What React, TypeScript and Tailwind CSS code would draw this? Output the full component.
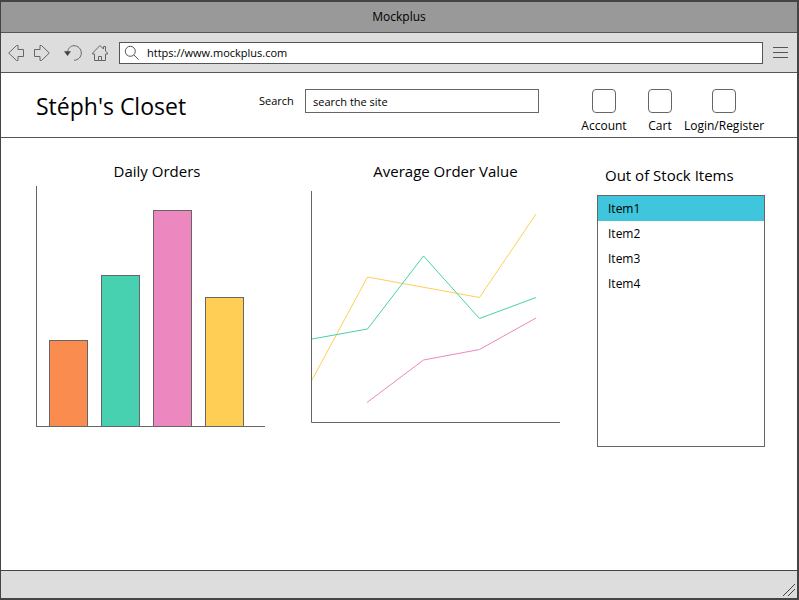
import { useState } from "react";

const BARS = [
  { name: "First", value: 86, color: "bg-[#fb8c50]" },
  { name: "Second", value: 151, color: "bg-[#48d1b0]" },
  { name: "Third", value: 216, color: "bg-[#ec87c0]" },
  { name: "Fourth", value: 129, color: "bg-[#ffce55]" },
];

const LINES = [
  { color: "#ffce55", points: "1,189 56.500,86 168.500,106.500 225,23" },
  { color: "#48cfad", points: "1,148 56.500,138 112.500,65 168.500,127.500 225,106.500" },
  { color: "#ec87c0", points: "56,211.500 112.500,169 168.500,158.500 225,127" },
];

const ITEMS = ["Item1", "Item2", "Item3", "Item4"];

function BackIcon() {
  return (
    <svg width="16" height="18" viewBox="0 0 16 18" fill="none" stroke="#666" aria-hidden="true">
      <path d="M.7 9 8.500 1.500h1.500v4h5.500v7H10v4H8.500Z" />
    </svg>
  );
}

function ForwardIcon() {
  return (
    <svg width="16" height="18" viewBox="0 0 16 18" fill="none" stroke="#666" aria-hidden="true">
      <path d="M15.300 9 7.500 1.500H6v4H.5v7H6v4h1.500Z" />
    </svg>
  );
}

function ReloadIcon() {
  return (
    <svg width="18" height="18" viewBox="0 0 18 18" fill="none" stroke="#666" aria-hidden="true">
      <path d="M3.500 8C4 4.500 6.500 1.700 10 1.700c4 0 7.300 3.200 7.300 7.300 0 4-3 7-7.300 7.300" />
      <path d="M0 7.300h7L3.500 12Z" fill="#444" stroke="none" />
    </svg>
  );
}

function HomeIcon() {
  return (
    <svg width="16" height="18" viewBox="0 0 16 18" fill="none" stroke="#666" aria-hidden="true">
      <path d="M.7 9 8 1.500l3.500 3.500V2.500h2V7l2 2v1h-2v6.500h-11V10h-2Z" />
      <path d="M6.500 16.500v-4h3v4" />
    </svg>
  );
}

function SearchIcon() {
  return (
    <svg width="16" height="16" viewBox="0 0 16 16" fill="none" stroke="#555" aria-hidden="true">
      <circle cx="6.300" cy="6.300" r="5" />
      <path d="m10 10 4.700 4.700" />
    </svg>
  );
}

function MenuIcon() {
  return (
    <svg width="15" height="11" viewBox="0 0 15 11" stroke="#555" aria-hidden="true">
      <path d="M0 .5h15M0 5.500h15M0 10.500h15" />
    </svg>
  );
}

function Shortcut({ label, width }: { label: string; width: string }) {
  return (
    <button type="button" className={`flex flex-col items-center gap-[5px] ${width}`}>
      <span className="size-6 rounded border border-[#666]" />
      <span className="leading-4 whitespace-nowrap">{label}</span>
    </button>
  );
}

function BarChart() {
  return (
    <div className="mt-[3px] mr-[9px] flex h-[241px] items-end gap-[13px] border-b border-l border-[#666] pr-[21px] pl-3">
      {BARS.map((bar) => (
        <div
          key={bar.name}
          className={`flex-1 border-x border-t border-[#666] ${bar.color}`}
          style={{ height: bar.value }}
        />
      ))}
    </div>
  );
}

function LineChart() {
  return (
    <svg
      className="mt-2 h-[232px] w-full"
      viewBox="0 0 249 232"
      preserveAspectRatio="none"
      fill="none"
      aria-hidden="true"
    >
      {LINES.map((line) => (
        <polyline key={line.color} points={line.points} stroke={line.color} vectorEffect="non-scaling-stroke" />
      ))}
      <path d="M.5 0v231.500H249" stroke="#666" vectorEffect="non-scaling-stroke" />
    </svg>
  );
}

export default function App() {
  const [selected, setSelected] = useState("Item1");

  return (
    <div className="flex min-h-screen flex-col border-t-2 border-r-2 border-b-2 border-l border-[#444] bg-white font-['Open_Sans','Noto_Sans',sans-serif] text-[12px] text-black">
      <div className="flex h-[31px] items-center justify-center border-b border-[#555] bg-[#999]">Mockplus</div>

      <nav className="flex h-10 items-center border-b border-[#555] bg-[#ddd] pr-[9px] pl-[7px]">
        <div className="flex items-center gap-[10px]">
          <button type="button" aria-label="Back"><BackIcon /></button>
          <button type="button" aria-label="Forward"><ForwardIcon /></button>
          <button type="button" aria-label="Reload" className="ml-1"><ReloadIcon /></button>
          <button type="button" aria-label="Home"><HomeIcon /></button>
        </div>
        <div className="mr-[10px] ml-[11px] flex h-[22px] flex-1 items-center gap-[7px] border border-[#555] bg-white pl-1">
          <SearchIcon />
          <input
            type="text"
            aria-label="Address"
            defaultValue="https://www.mockplus.com"
            className="h-5 min-w-0 flex-1 text-[11px] outline-none"
          />
        </div>
        <button type="button" aria-label="Menu"><MenuIcon /></button>
      </nav>

      <header className="flex h-[65px] justify-between border-b border-[#555] pr-[33px] pl-[35px]">
        <h1 className="w-[223px] pt-[15px] text-[23px] leading-9 whitespace-nowrap">Stéph's Closet</h1>
        <div className="flex flex-1 items-start pt-4">
          <label htmlFor="site-search" className="w-[46px] text-[11px] leading-6">Search</label>
          <input
            id="site-search"
            type="text"
            defaultValue="search the site"
            className="h-6 min-w-0 flex-1 border border-[#666] px-[7px] text-[11px] outline-none"
          />
        </div>
        <div className="ml-[33px] flex items-start pt-4">
          <Shortcut label="Account" width="w-16" />
          <Shortcut label="Cart" width="w-12" />
          <Shortcut label="Login/Register" width="w-20" />
        </div>
      </header>

      <main className="grid flex-1 grid-cols-[238fr_249fr_168fr] items-start gap-x-[37px] pt-[21px] pr-8 pb-10 pl-[35px]">
        <section>
          <h2 className="pl-1 text-center text-[15px] leading-6">Daily Orders</h2>
          <BarChart />
        </section>
        <section>
          <h2 className="pl-5 text-center text-[15px] leading-6">Average Order Value</h2>
          <LineChart />
        </section>
        <section>
          <h2 className="mt-1 pl-2 text-[15px] leading-6 whitespace-nowrap">Out of Stock Items</h2>
          <ul className="mt-2 h-[252px] border border-[#666]">
            {ITEMS.map((item) => (
              <li key={item}>
                <button
                  type="button"
                  aria-pressed={item === selected}
                  onClick={() => setSelected(item)}
                  className={`h-[25px] w-full pt-px pl-[10px] text-left ${item === selected ? "bg-[#3fc5dc]" : ""}`}
                >
                  {item}
                </button>
              </li>
            ))}
          </ul>
        </section>
      </main>

      <footer className="flex h-7 items-end justify-end border-t border-[#444] bg-[#ddd] p-[2px]">
        <svg width="12" height="12" viewBox="0 0 12 12" stroke="#444" aria-hidden="true">
          <path d="M0 12 12 0M5 12l7-7" />
        </svg>
      </footer>
    </div>
  );
}
